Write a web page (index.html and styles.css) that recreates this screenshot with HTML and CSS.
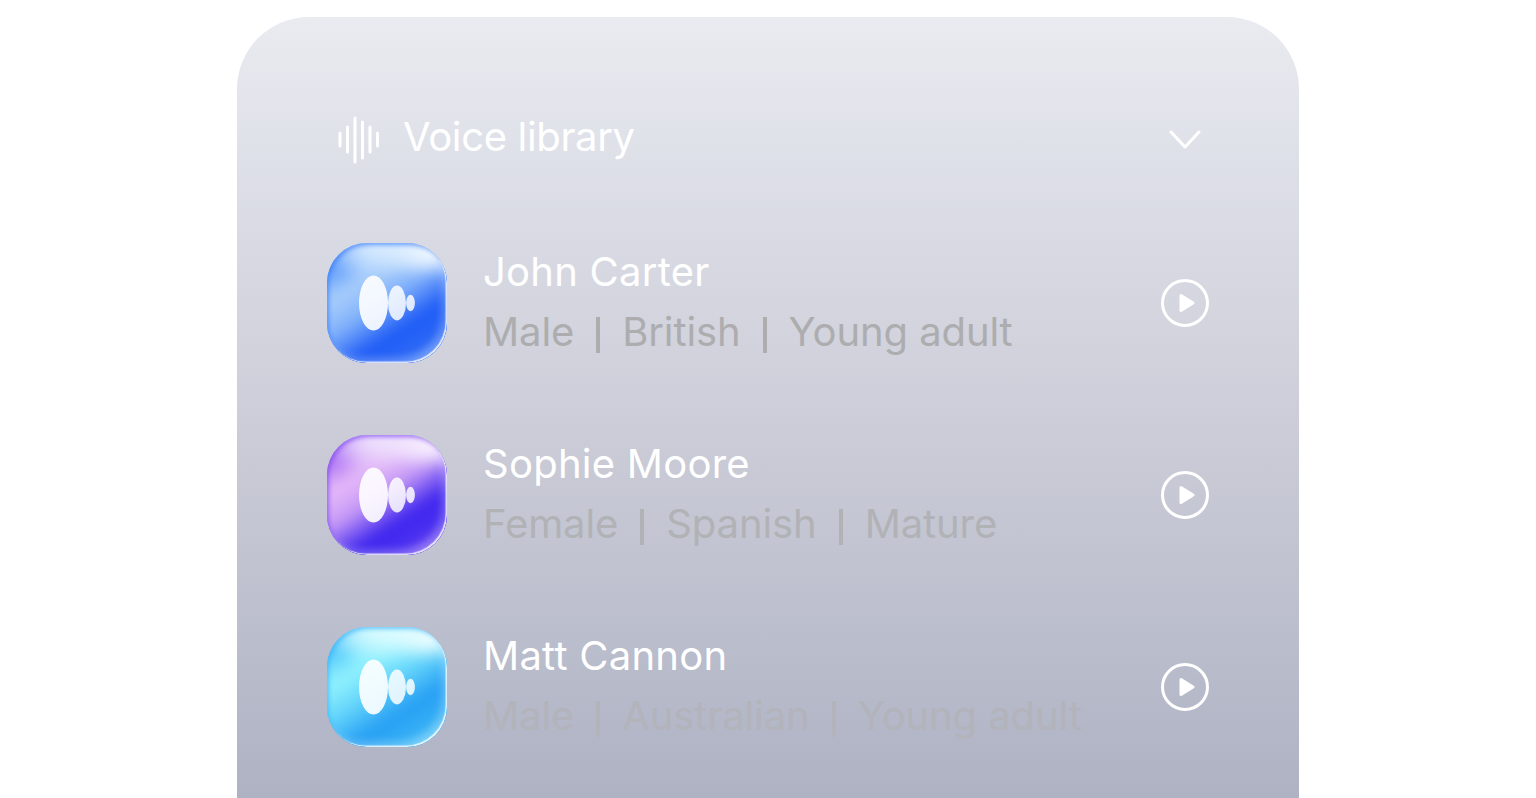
FILE: index.html
```html
<!DOCTYPE html>
<html lang="en">
<head>
    <meta charset="UTF-8">
    <meta name="viewport" content="width=device-width, initial-scale=1.0">
    <title>Voice library</title>
    <link rel="stylesheet" href="styles.css">
</head>
<body>
    <main class="card">
        <header class="card-head">
            <svg class="wave-icon" width="44" height="48" viewBox="0 0 44 48" fill="none" stroke="#fff" stroke-width="3" stroke-linecap="round">
                <path d="M3 17v13M10.500 11v25M18 2v44M25.500 6v36M33 11v25M40.500 17v13"/>
            </svg>
            <h1>Voice library</h1>
            <button class="chevron" aria-label="Collapse">
                <svg width="32" height="20" viewBox="0 0 32 20" fill="none" stroke="#fff" stroke-width="3" stroke-linecap="round" stroke-linejoin="round">
                    <path d="M2 2l14 15L30 2"/>
                </svg>
            </button>
        </header>

        <ul class="voices">
            <li class="voice">
                <div class="avatar avatar-blue">
                    <span class="glow"></span>
                    <svg class="blobs" width="56" height="56" viewBox="0 0 56 56"><ellipse cx="14.500" cy="28" rx="14.500" ry="27.500"/><ellipse class="blob-mid" cx="38" cy="28" rx="9" ry="17.500"/><ellipse class="blob-mid" cx="51.500" cy="28" rx="4.400" ry="8.200"/></svg>
                </div>
                <div class="voice-text">
                    <h2>John Carter</h2>
                    <p>Male<i></i>British<i></i>Young adult</p>
                </div>
                <button class="play" aria-label="Play">
                    <svg width="18" height="22" viewBox="0 0 18 22" fill="#fff" stroke="#fff" stroke-width="3" stroke-linejoin="round"><path d="M3 3.500v15l12-7.500z"/></svg>
                </button>
            </li>
            <li class="voice">
                <div class="avatar avatar-purple">
                    <span class="glow"></span>
                    <svg class="blobs" width="56" height="56" viewBox="0 0 56 56"><ellipse cx="14.500" cy="28" rx="14.500" ry="27.500"/><ellipse class="blob-mid" cx="38" cy="28" rx="9" ry="17.500"/><ellipse class="blob-mid" cx="51.500" cy="28" rx="4.400" ry="8.200"/></svg>
                </div>
                <div class="voice-text">
                    <h2>Sophie Moore</h2>
                    <p class="dim">Female<i></i>Spanish<i></i>Mature</p>
                </div>
                <button class="play" aria-label="Play">
                    <svg width="18" height="22" viewBox="0 0 18 22" fill="#fff" stroke="#fff" stroke-width="3" stroke-linejoin="round"><path d="M3 3.500v15l12-7.500z"/></svg>
                </button>
            </li>
            <li class="voice">
                <div class="avatar avatar-cyan">
                    <span class="glow"></span>
                    <svg class="blobs" width="56" height="56" viewBox="0 0 56 56"><ellipse cx="14.500" cy="28" rx="14.500" ry="27.500"/><ellipse class="blob-mid" cx="38" cy="28" rx="9" ry="17.500"/><ellipse class="blob-mid" cx="51.500" cy="28" rx="4.400" ry="8.200"/></svg>
                </div>
                <div class="voice-text">
                    <h2>Matt Cannon</h2>
                    <p class="faded">Male<i></i>Australian<i></i>Young adult</p>
                </div>
                <button class="play" aria-label="Play">
                    <svg width="18" height="22" viewBox="0 0 18 22" fill="#fff" stroke="#fff" stroke-width="3" stroke-linejoin="round"><path d="M3 3.500v15l12-7.500z"/></svg>
                </button>
            </li>
        </ul>
    </main>
</body>
</html>
```

FILE: styles.css
```css
/* page */
* {
    box-sizing: border-box;
}

html, body {
    height: 100%;
}

body {
    margin: 0;
    background: #fff;
    font-family: Inter, "Liberation Sans", sans-serif;
    overflow: hidden;
    display: flex;
    justify-content: center;
    align-items: flex-start;
}

.card {
    width: 1062px;
    height: 781px;
    margin-top: 17px;
    padding: 97px 90px 0;
    border-radius: 72px 72px 0 0;
    background: linear-gradient(180deg, #eaebf0 0, #dfe1e9 130px, #cdced9 390px, #aeb2c3 781px);
    flex-shrink: 0;
}

/* header row */
.card-head {
    display: flex;
    align-items: center;
    height: 48px;
    margin-bottom: 81px;
}

.wave-icon {
    margin: 3px 0 0 10px;
    flex-shrink: 0;
}

.card-head h1 {
    margin: 0 0 2px 22px;
    color: #fff;
    font-size: 40px;
    font-weight: 400;
    letter-spacing: -0.35px;
    line-height: 48px;
    flex: 1;
}

.chevron {
    width: 48px;
    margin-top: 4px;
    padding: 0;
    border: none;
    background: none;
    display: flex;
    justify-content: center;
}

/* voices */
.voices {
    list-style: none;
    margin: 0;
    padding: 0;
    display: flex;
    flex-direction: column;
    gap: 72px;
}

.voice {
    display: flex;
    align-items: center;
    height: 120px;
}

.avatar {
    position: relative;
    width: 120px;
    height: 120px;
    border-radius: 40px;
    overflow: hidden;
    flex-shrink: 0;
    display: flex;
    align-items: center;
    justify-content: center;
}

/* glass rim on top of the colour */
.avatar::after {
    content: "";
    position: absolute;
    inset: 0;
    border-radius: inherit;
    box-shadow:
        inset -1.5px -1.5px 1px rgba(255, 255, 255, 0.8),
        inset -6px -6px 7px rgba(255, 255, 255, 0.22),
        inset 2px 2px 4px var(--rim);
}

.glow {
    position: absolute;
    inset: -8px;
    filter: blur(6px);
}

.avatar-blue {
    --rim: rgba(50, 120, 250, 0.6);
    background: #2a62f5;
}

.avatar-blue .glow {
    background:
        radial-gradient(ellipse 40px 24px at 82% 14%, #f8fcff 0, rgba(248, 252, 255, 0) 100%),
        radial-gradient(ellipse 76px 30px at 50% 10%, #d6eafe 20%, rgba(214, 234, 254, 0) 100%),
        radial-gradient(ellipse 34px 40px at 8% 14%, #4a8cfb 0, rgba(74, 140, 251, 0) 100%),
        linear-gradient(147deg, #6fa8fb 0, #a6ccfb 34%, #82b2fb 48%, #1f5cf6 66%, #2a66f6 78%, #7cb0fa 100%);
}

.avatar-purple {
    --rim: rgba(130, 70, 240, 0.65);
    background: #4328ee;
}

.avatar-purple .glow {
    background:
        radial-gradient(ellipse 40px 24px at 82% 14%, #faf6ff 0, rgba(250, 246, 255, 0) 100%),
        radial-gradient(ellipse 76px 30px at 50% 10%, #eee0fd 20%, rgba(238, 224, 253, 0) 100%),
        radial-gradient(ellipse 34px 40px at 8% 14%, #9a5ff2 0, rgba(154, 95, 242, 0) 100%),
        linear-gradient(147deg, #b483f4 0, #e4b8f8 34%, #c498f6 48%, #3f26ee 66%, #4a30f0 78%, #d098f4 100%);
}

.avatar-cyan {
    --rim: rgba(50, 175, 250, 0.6);
    background: #2ba6f5;
}

.avatar-cyan .glow {
    background:
        radial-gradient(ellipse 40px 24px at 82% 14%, #f6ffff 0, rgba(246, 255, 255, 0) 100%),
        radial-gradient(ellipse 76px 30px at 50% 10%, #d8fbff 20%, rgba(216, 251, 255, 0) 100%),
        radial-gradient(ellipse 34px 40px at 8% 14%, #42bcf9 0, rgba(66, 188, 249, 0) 100%),
        linear-gradient(147deg, #5ccdfb 0, #90f1fd 34%, #66d6fb 48%, #279ff4 66%, #35aef5 78%, #90ecfc 100%);
}

.blobs {
    position: relative;
    fill: #fff;
    fill-opacity: 0.9;
}

.blobs .blob-mid {
    fill-opacity: 0.84;
}

.voice-text {
    flex: 1;
    margin-left: 36px;
    padding-bottom: 2px;
}

.voice-text h2 {
    margin: 0;
    color: #fff;
    font-size: 40px;
    font-weight: 400;
    letter-spacing: 0.25px;
    line-height: 48px;
}

.voice-text p {
    margin: 12px 0 0;
    color: #adadaf;
    font-size: 40px;
    letter-spacing: -0.1px;
    line-height: 48px;
}

.voice-text p.dim {
    color: #b1b2b6;
}

.voice-text p.faded {
    color: #b2b3bb;
}

/* separator, shorter than the font's own pipe */
.voice-text i {
    display: inline-block;
    width: 4px;
    height: 36px;
    margin: 0 22px;
    vertical-align: -7px;
    background: currentColor;
}

.play {
    width: 48px;
    height: 48px;
    padding: 0;
    border: 3px solid #fff;
    border-radius: 50%;
    background: none;
    flex-shrink: 0;
    display: flex;
    align-items: center;
    justify-content: center;
}

.play svg {
    margin-left: 3px;
}
```
